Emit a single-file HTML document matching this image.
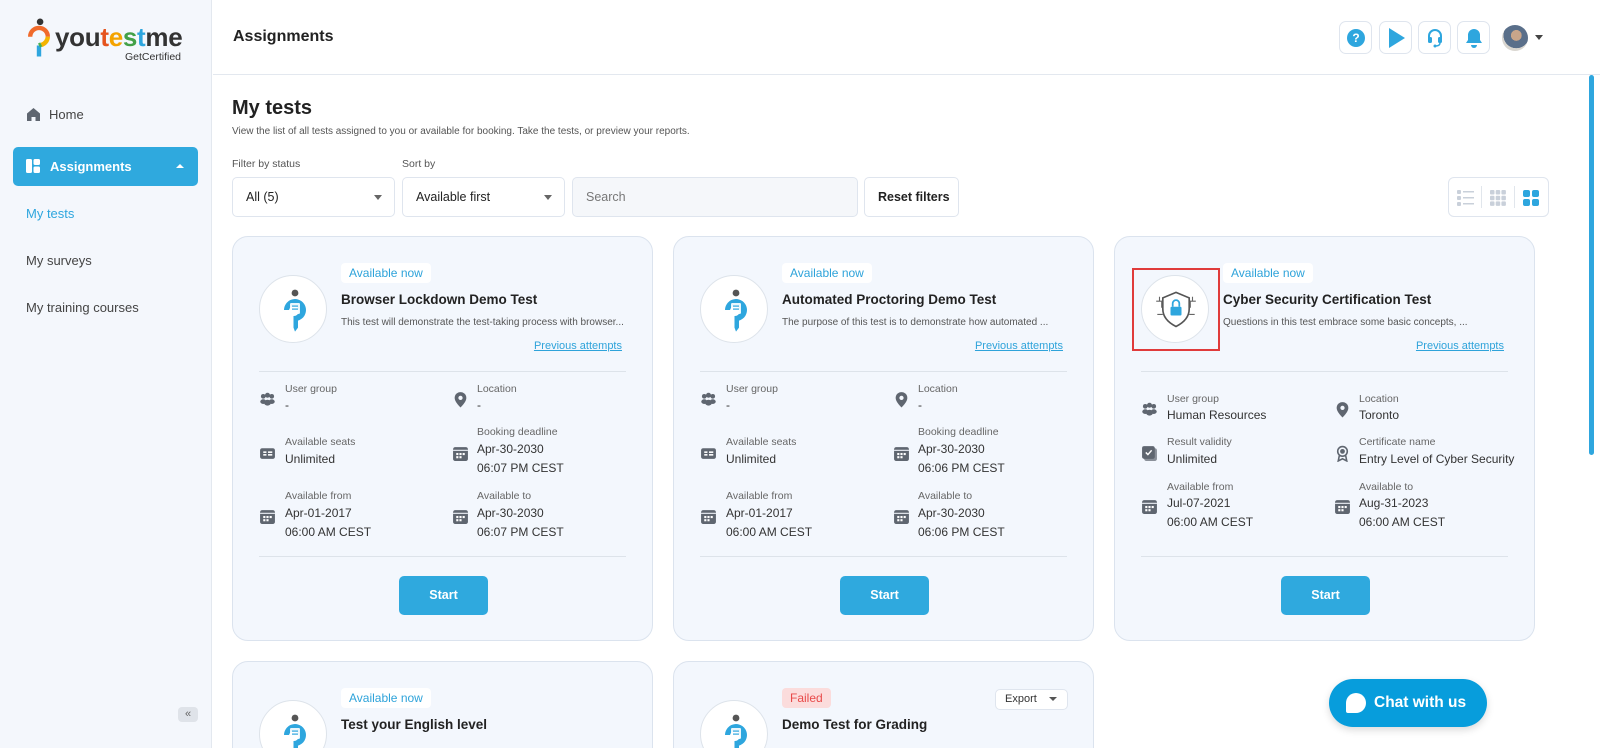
<!DOCTYPE html>
<html><head><meta charset="utf-8"><style>
*{box-sizing:border-box;margin:0;padding:0}
html{width:1600px;height:748px;overflow:hidden}
body{width:1600px;height:748px;overflow:hidden;font-family:"Liberation Sans",Arial,sans-serif;background:#fff;position:relative;color:#222}
.abs{position:absolute}
.side{position:absolute;left:0;top:0;width:212px;height:748px;background:#f4f7fc;border-right:1px solid #e3e8ef}
.nav{position:absolute;left:26px;font-size:13px;color:#444;line-height:16px}
.top{position:absolute;left:213px;top:0;right:0;height:75px;border-bottom:1px solid #e3e8ef;background:#fff}
.tb{position:absolute;top:21px;width:33px;height:33px;border:1px solid #dfe5ee;border-radius:7px;background:#fff}
.lbl{position:absolute;font-size:10.5px;color:#555;line-height:16px}
.sel{position:absolute;top:177px;height:40px;border:1px solid #dfe5ee;border-radius:5px;background:#fff;font-size:12.5px;line-height:38px;padding-left:13px;color:#222}
.caret{position:absolute;right:12px;top:17px;border:4px solid transparent;border-top:5px solid #666}
.card{position:absolute;width:421px;height:405px;background:#f3f7fd;border:1px solid #dbe3ee;border-radius:16px;overflow:hidden}
.card .c{position:absolute;line-height:16px;white-space:nowrap}
.circ{position:absolute;left:26px;top:38px;width:68px;height:68px;border-radius:50%;background:#fff;border:1px solid #dde3ea}
.badge{left:108px;top:26px;height:20px;line-height:20px!important;padding:0 8px;background:#fff;color:#2ea3da;font-size:12px;border-radius:4px}
.title{left:108px;top:55px;font-size:13.5px;font-weight:bold;color:#222}
.desc{left:108px;top:78px;font-size:10px;color:#555}
.prev{right:30px;top:101px;font-size:11px;color:#2ea3da;text-decoration:underline}
.hr{position:absolute;left:26px;right:26px;height:1px;background:#dde3ea}
.l{font-size:10.5px;color:#666}
.v{font-size:12px;color:#333}
.ic{position:absolute;width:17px;height:17px}
.start{position:absolute;left:166px;top:339px;width:89px;height:39px;background:#2fa9de;border-radius:5px;color:#fff;font-weight:bold;font-size:12.5px;text-align:center;line-height:39px}
</style></head><body>
<svg width="0" height="0" style="position:absolute"><defs>
<g id="grp" fill="#5f6670"><circle cx="4" cy="5" r="2.2"/><circle cx="8" cy="4" r="2.4"/><circle cx="12" cy="5" r="2.2"/><ellipse cx="4" cy="10" rx="2.8" ry="2.2"/><ellipse cx="12" cy="10" rx="2.8" ry="2.2"/><ellipse cx="8" cy="11" rx="3.2" ry="2.8"/></g>
<g id="loc"><path d="M8 1a5.5 5.5 0 0 0-5.5 5.5C2.5 10.5 8 15.5 8 15.5s5.5-5 5.5-9A5.5 5.5 0 0 0 8 1z" fill="#5f6670"/><circle cx="8" cy="6.5" r="2" fill="#f3f7fd"/></g>
<g id="seat"><rect x="1" y="3" width="14" height="10" rx="2" fill="#5f6670"/><rect x="4" y="6" width="3" height="1.5" fill="#fff"/><rect x="4" y="8.5" width="3" height="1.5" fill="#fff"/><rect x="8.5" y="6" width="4" height="1.5" fill="#fff"/><rect x="8.5" y="8.5" width="4" height="1.5" fill="#fff"/></g>
<g id="cal"><rect x="1" y="2" width="14" height="13" rx="2" fill="#5f6670"/><rect x="1" y="4.5" width="14" height="1" fill="#f3f7fd"/><g fill="#fff"><rect x="4" y="7.5" width="2" height="2"/><rect x="7" y="7.5" width="2" height="2"/><rect x="10" y="7.5" width="2" height="2"/><rect x="4" y="10.5" width="2" height="2"/><rect x="7" y="10.5" width="2" height="2"/></g></g>
<g id="chk"><rect x="3" y="3" width="12" height="12" rx="2" fill="#8a9099"/><rect x="1" y="1" width="12" height="12" rx="2" fill="#5f6670"/><path d="M4.5 7l2 2 3.5-4" stroke="#fff" stroke-width="1.4" fill="none"/></g>
<g id="cert" fill="none" stroke="#5f6670" stroke-width="1.5"><circle cx="8" cy="6" r="4.5"/><path d="M5 10l-1 5 4-2 4 2-1-5"/><circle cx="8" cy="6" r="1.5" fill="#5f6670"/></g>
<g id="ytm"><circle cx="15" cy="5" r="3.4" fill="#555"/><path d="M4 22a11 11 0 1 1 14 10.6v7l-3 4-1.5-4V28a5 5 0 1 0-4.5-6z" fill="#2ea6de"/><rect x="10" y="15" width="10" height="11" rx="1.2" fill="#fff" opacity=".9"/><rect x="12" y="17.5" width="6" height="1.2" fill="#2ea6de"/><rect x="12" y="20.5" width="6" height="1.2" fill="#2ea6de"/></g>
</defs></svg>

<div class="side">
  <svg class="abs" style="left:28px;top:18px" width="22" height="44" viewBox="0 0 20 40"><circle cx="11" cy="3.5" r="3" fill="#333"/><path d="M2 17a8 8 0 0 1 16 0" stroke="#f06a2b" stroke-width="4" fill="none"/><path d="M18 17a8 8 0 0 1-6 7.5" stroke="#f4b400" stroke-width="4" fill="none"/><path d="M10 25v10" stroke="#2ea6de" stroke-width="4"/><path d="M10 25l2-1" stroke="#4caf50" stroke-width="4"/></svg>
  <div class="abs" style="left:55px;top:22px;font-size:26px;font-weight:bold;letter-spacing:-0.3px;line-height:30px"><span style="color:#333">you</span><span style="color:#e5541e">t</span><span style="color:#f4a300">e</span><span style="color:#43a047">s</span><span style="color:#2ea6de">t</span><span style="color:#333">me</span></div>
  <div class="abs" style="left:125px;top:51px;font-size:10.5px;color:#333">GetCertified</div>
  <svg class="abs" style="left:26px;top:107px" width="15" height="15" viewBox="0 0 15 15"><path d="M7.5 1L1 6.5V14h4.5V10h4v4H14V6.5z" fill="#5f6670"/></svg>
  <div class="nav" style="left:49px;top:107px">Home</div>
  <div class="abs" style="left:13px;top:147px;width:185px;height:39px;background:#2fa9de;border-radius:5px"></div>
  <svg class="abs" style="left:26px;top:159px" width="14" height="14" viewBox="0 0 14 14"><rect x="0" y="0" width="6" height="14" rx="1.5" fill="#fff"/><rect x="7.5" y="0" width="6.5" height="6" rx="1.5" fill="#fff"/><rect x="7.5" y="7.5" width="6.5" height="6.5" rx="1.5" fill="#fff"/></svg>
  <div class="nav" style="left:50px;top:159px;color:#fff;font-weight:bold">Assignments</div>
  <div class="abs" style="left:176px;top:164px;border:4px solid transparent;border-bottom:4px solid #fff;border-top:0"></div>
  <div class="nav" style="top:206px;color:#2ea6de">My tests</div>
  <div class="nav" style="top:253px">My surveys</div>
  <div class="nav" style="top:300px">My training courses</div>
  <div class="abs" style="left:178px;top:707px;width:20px;height:15px;background:#dfe3e9;border-radius:4px;font-size:11px;color:#666;text-align:center;line-height:14px">«</div>
</div>

<div class="top">
  <div class="abs" style="left:20px;top:28px;font-size:16px;font-weight:bold;color:#222">Assignments</div>
  <div class="tb" style="left:1126px"><div class="abs" style="left:7px;top:7px;width:18px;height:18px;border-radius:50%;background:#2ea6de;color:#fff;font-size:12px;font-weight:bold;text-align:center;line-height:18px">?</div></div>
  <div class="tb" style="left:1166px"><div class="abs" style="left:9px;top:6px;border-left:16px solid #2ea6de;border-top:10px solid transparent;border-bottom:10px solid transparent"></div></div>
  <div class="tb" style="left:1205px"><svg class="abs" style="left:7px;top:6px" width="18" height="20" viewBox="0 0 18 20"><path d="M3 11V8a6 6 0 0 1 12 0v3" stroke="#2ea6de" stroke-width="2" fill="none"/><rect x="2" y="9" width="4" height="6" rx="1.5" fill="#2ea6de"/><rect x="12" y="9" width="4" height="6" rx="1.5" fill="#2ea6de"/><path d="M14 15q0 3-5 3" stroke="#2ea6de" stroke-width="1.5" fill="none"/><circle cx="9" cy="18" r="1.5" fill="#2ea6de"/></svg></div>
  <div class="tb" style="left:1244px"><svg class="abs" style="left:7px;top:6px" width="18" height="20" viewBox="0 0 18 20"><path d="M9 1a6 6 0 0 0-6 6v5l-2 3h16l-2-3V7a6 6 0 0 0-6-6z" fill="#2ea6de"/><path d="M6 17a3 3 0 0 0 6 0z" fill="#2ea6de"/></svg></div>
  <div class="abs" style="left:1289px;top:25px;width:26px;height:26px;border-radius:50%;background:radial-gradient(circle at 55% 40%,#c9a58a 0 25%,#5a6f8a 26% 60%,#d9d6d0 61%)"></div>
  <div class="abs" style="left:1322px;top:35px;border:4px solid transparent;border-top:5px solid #444"></div>
</div>
<div class="abs" style="left:1589px;top:75px;width:5px;height:380px;background:#2ea6de;border-radius:3px"></div>

<div class="abs" style="left:232px;top:97px;font-size:20px;font-weight:bold;color:#222">My tests</div>
<div class="abs" style="left:232px;top:126px;font-size:10px;color:#555">View the list of all tests assigned to you or available for booking. Take the tests, or preview your reports.</div>
<div class="lbl" style="left:232px;top:156px">Filter by status</div>
<div class="lbl" style="left:402px;top:156px">Sort by</div>
<div class="sel" style="left:232px;width:163px">All (5)<span class="caret"></span></div>
<div class="sel" style="left:402px;width:163px">Available first<span class="caret"></span></div>
<div class="sel" style="left:572px;width:286px;background:#f5f7fa;color:#777">Search</div>
<div class="sel" style="left:864px;width:95px;font-weight:bold;padding-left:13px">Reset filters</div>
<div class="abs" style="left:1448px;top:177px;width:101px;height:40px;border:1px solid #dfe5ee;border-radius:6px;background:#fff">
  <svg class="abs" style="left:8px;top:11px" width="18" height="18" viewBox="0 0 18 18" fill="#c9d0da"><rect x="0" y="1" width="4" height="4" rx="1"/><rect x="0" y="7" width="4" height="4" rx="1"/><rect x="0" y="13" width="4" height="4" rx="1"/><rect x="6" y="2" width="11" height="1.5"/><rect x="6" y="8" width="11" height="1.5"/><rect x="6" y="14" width="11" height="1.5"/></svg>
  <div class="abs" style="left:32px;top:8px;width:1px;height:22px;background:#e1e6ec"></div>
  <svg class="abs" style="left:41px;top:12px" width="16" height="16" viewBox="0 0 16 16" fill="#c9d0da"><rect x="0" y="0" width="4.5" height="4.5" rx="1"/><rect x="5.7" y="0" width="4.5" height="4.5" rx="1"/><rect x="11.4" y="0" width="4.5" height="4.5" rx="1"/><rect x="0" y="5.7" width="4.5" height="4.5" rx="1"/><rect x="5.7" y="5.7" width="4.5" height="4.5" rx="1"/><rect x="11.4" y="5.7" width="4.5" height="4.5" rx="1"/><rect x="0" y="11.4" width="4.5" height="4.5" rx="1"/><rect x="5.7" y="11.4" width="4.5" height="4.5" rx="1"/><rect x="11.4" y="11.4" width="4.5" height="4.5" rx="1"/></svg>
  <div class="abs" style="left:65px;top:8px;width:1px;height:22px;background:#e1e6ec"></div>
  <svg class="abs" style="left:74px;top:12px" width="16" height="16" viewBox="0 0 16 16" fill="#2ea6de"><rect x="0" y="0" width="7" height="7" rx="2"/><rect x="9" y="0" width="7" height="7" rx="2"/><rect x="0" y="9" width="7" height="7" rx="2"/><rect x="9" y="9" width="7" height="7" rx="2"/></svg>
</div>

<!-- Card 1 -->
<div class="card" style="left:232px;top:236px">
  <div class="circ"><svg class="abs" style="left:20px;top:12px" width="28" height="46" viewBox="0 0 28 46"><use href="#ytm"/></svg></div>
  <div class="c badge">Available now</div>
  <div class="c title">Browser Lockdown Demo Test</div>
  <div class="c desc">This test will demonstrate the test-taking process with browser...</div>
  <div class="c prev">Previous attempts</div>
  <div class="hr" style="top:134px"></div>
  <svg class="ic" style="left:26px;top:154px" viewBox="0 0 16 16"><use href="#grp"/></svg>
  <div class="c l" style="left:52px;top:144px">User group</div><div class="c v" style="left:52px;top:160px">-</div>
  <svg class="ic" style="left:219px;top:154px" viewBox="0 0 16 16"><use href="#loc"/></svg>
  <div class="c l" style="left:244px;top:144px">Location</div><div class="c v" style="left:244px;top:160px">-</div>
  <svg class="ic" style="left:26px;top:208px" viewBox="0 0 16 16"><use href="#seat"/></svg>
  <div class="c l" style="left:52px;top:197px">Available seats</div><div class="c v" style="left:52px;top:214px">Unlimited</div>
  <svg class="ic" style="left:219px;top:208px" viewBox="0 0 16 16"><use href="#cal"/></svg>
  <div class="c l" style="left:244px;top:187px">Booking deadline</div><div class="c v" style="left:244px;top:204px">Apr-30-2030</div><div class="c v" style="left:244px;top:223px">06:07 PM CEST</div>
  <svg class="ic" style="left:26px;top:271px" viewBox="0 0 16 16"><use href="#cal"/></svg>
  <div class="c l" style="left:52px;top:251px">Available from</div><div class="c v" style="left:52px;top:268px">Apr-01-2017</div><div class="c v" style="left:52px;top:287px">06:00 AM CEST</div>
  <svg class="ic" style="left:219px;top:271px" viewBox="0 0 16 16"><use href="#cal"/></svg>
  <div class="c l" style="left:244px;top:251px">Available to</div><div class="c v" style="left:244px;top:268px">Apr-30-2030</div><div class="c v" style="left:244px;top:287px">06:07 PM CEST</div>
  <div class="hr" style="top:319px"></div>
  <div class="start">Start</div>
</div>

<!-- Card 2 -->
<div class="card" style="left:673px;top:236px">
  <div class="circ"><svg class="abs" style="left:20px;top:12px" width="28" height="46" viewBox="0 0 28 46"><use href="#ytm"/></svg></div>
  <div class="c badge">Available now</div>
  <div class="c title">Automated Proctoring Demo Test</div>
  <div class="c desc">The purpose of this test is to demonstrate how automated ...</div>
  <div class="c prev">Previous attempts</div>
  <div class="hr" style="top:134px"></div>
  <svg class="ic" style="left:26px;top:154px" viewBox="0 0 16 16"><use href="#grp"/></svg>
  <div class="c l" style="left:52px;top:144px">User group</div><div class="c v" style="left:52px;top:160px">-</div>
  <svg class="ic" style="left:219px;top:154px" viewBox="0 0 16 16"><use href="#loc"/></svg>
  <div class="c l" style="left:244px;top:144px">Location</div><div class="c v" style="left:244px;top:160px">-</div>
  <svg class="ic" style="left:26px;top:208px" viewBox="0 0 16 16"><use href="#seat"/></svg>
  <div class="c l" style="left:52px;top:197px">Available seats</div><div class="c v" style="left:52px;top:214px">Unlimited</div>
  <svg class="ic" style="left:219px;top:208px" viewBox="0 0 16 16"><use href="#cal"/></svg>
  <div class="c l" style="left:244px;top:187px">Booking deadline</div><div class="c v" style="left:244px;top:204px">Apr-30-2030</div><div class="c v" style="left:244px;top:223px">06:06 PM CEST</div>
  <svg class="ic" style="left:26px;top:271px" viewBox="0 0 16 16"><use href="#cal"/></svg>
  <div class="c l" style="left:52px;top:251px">Available from</div><div class="c v" style="left:52px;top:268px">Apr-01-2017</div><div class="c v" style="left:52px;top:287px">06:00 AM CEST</div>
  <svg class="ic" style="left:219px;top:271px" viewBox="0 0 16 16"><use href="#cal"/></svg>
  <div class="c l" style="left:244px;top:251px">Available to</div><div class="c v" style="left:244px;top:268px">Apr-30-2030</div><div class="c v" style="left:244px;top:287px">06:06 PM CEST</div>
  <div class="hr" style="top:319px"></div>
  <div class="start">Start</div>
</div>

<!-- Card 3 -->
<div class="card" style="left:1114px;top:236px">
  <div class="circ"><svg class="abs" style="left:12px;top:12px" width="44" height="44" viewBox="0 0 40 40"><path d="M20 4l12 5v10c0 8-6 13-12 16C14 32 8 27 8 19V9z" fill="none" stroke="#555" stroke-width="1.5"/><path d="M2 12h5v6M38 12h-5v6M3 24h5M37 24h-5M5 8v4M35 8v4" stroke="#666" stroke-width="1" fill="none"/><rect x="15" y="17" width="10" height="8" rx="1" fill="#2ea6de"/><path d="M17 17v-3a3 3 0 0 1 6 0v3" stroke="#2ea6de" stroke-width="1.6" fill="none"/></svg></div>
  <div class="abs" style="left:17px;top:31px;width:88px;height:83px;border:2px solid #e03b3b"></div>
  <div class="c badge">Available now</div>
  <div class="c title">Cyber Security Certification Test</div>
  <div class="c desc">Questions in this test embrace some basic concepts, ...</div>
  <div class="c prev">Previous attempts</div>
  <div class="hr" style="top:134px"></div>
  <svg class="ic" style="left:26px;top:164px" viewBox="0 0 16 16"><use href="#grp"/></svg>
  <div class="c l" style="left:52px;top:154px">User group</div><div class="c v" style="left:52px;top:170px">Human Resources</div>
  <svg class="ic" style="left:219px;top:164px" viewBox="0 0 16 16"><use href="#loc"/></svg>
  <div class="c l" style="left:244px;top:154px">Location</div><div class="c v" style="left:244px;top:170px">Toronto</div>
  <svg class="ic" style="left:26px;top:208px" viewBox="0 0 16 16"><use href="#chk"/></svg>
  <div class="c l" style="left:52px;top:197px">Result validity</div><div class="c v" style="left:52px;top:214px">Unlimited</div>
  <svg class="ic" style="left:219px;top:208px" viewBox="0 0 16 16"><use href="#cert"/></svg>
  <div class="c l" style="left:244px;top:197px">Certificate name</div><div class="c v" style="left:244px;top:214px">Entry Level of Cyber Security</div>
  <svg class="ic" style="left:26px;top:261px" viewBox="0 0 16 16"><use href="#cal"/></svg>
  <div class="c l" style="left:52px;top:242px">Available from</div><div class="c v" style="left:52px;top:258px">Jul-07-2021</div><div class="c v" style="left:52px;top:277px">06:00 AM CEST</div>
  <svg class="ic" style="left:219px;top:261px" viewBox="0 0 16 16"><use href="#cal"/></svg>
  <div class="c l" style="left:244px;top:242px">Available to</div><div class="c v" style="left:244px;top:258px">Aug-31-2023</div><div class="c v" style="left:244px;top:277px">06:00 AM CEST</div>
  <div class="hr" style="top:319px"></div>
  <div class="start">Start</div>
</div>

<!-- Row 2 -->
<div class="card" style="left:232px;top:661px;height:110px">
  <div class="circ"><svg class="abs" style="left:20px;top:12px" width="28" height="46" viewBox="0 0 28 46"><use href="#ytm"/></svg></div>
  <div class="c badge">Available now</div>
  <div class="c title">Test your English level</div>
</div>
<div class="card" style="left:673px;top:661px;height:110px">
  <div class="circ"><svg class="abs" style="left:20px;top:12px" width="28" height="46" viewBox="0 0 28 46"><use href="#ytm"/></svg></div>
  <div class="c badge" style="background:#fbdcdc;color:#e84a4a">Failed</div>
  <div class="abs" style="left:321px;top:27px;width:73px;height:21px;border:1px solid #dfe5ee;border-radius:5px;background:#fff;font-size:11px;line-height:19px;padding-left:9px;color:#333">Export<span class="abs" style="right:10px;top:7px;border:4px solid transparent;border-top:4px solid #555"></span></div>
  <div class="c title">Demo Test for Grading</div>
</div>

<div class="abs" style="left:1329px;top:679px;width:158px;height:48px;border-radius:24px;background:#079ddc;box-shadow:0 3px 8px rgba(0,0,0,.15)">
  <div class="abs" style="left:17px;top:14px;width:20px;height:20px;background:#fff;border-radius:10px 10px 10px 2px"></div>
  <div class="abs" style="left:45px;top:14px;color:#fff;font-weight:bold;font-size:15.5px;line-height:20px">Chat with us</div>
</div>
</body></html>
